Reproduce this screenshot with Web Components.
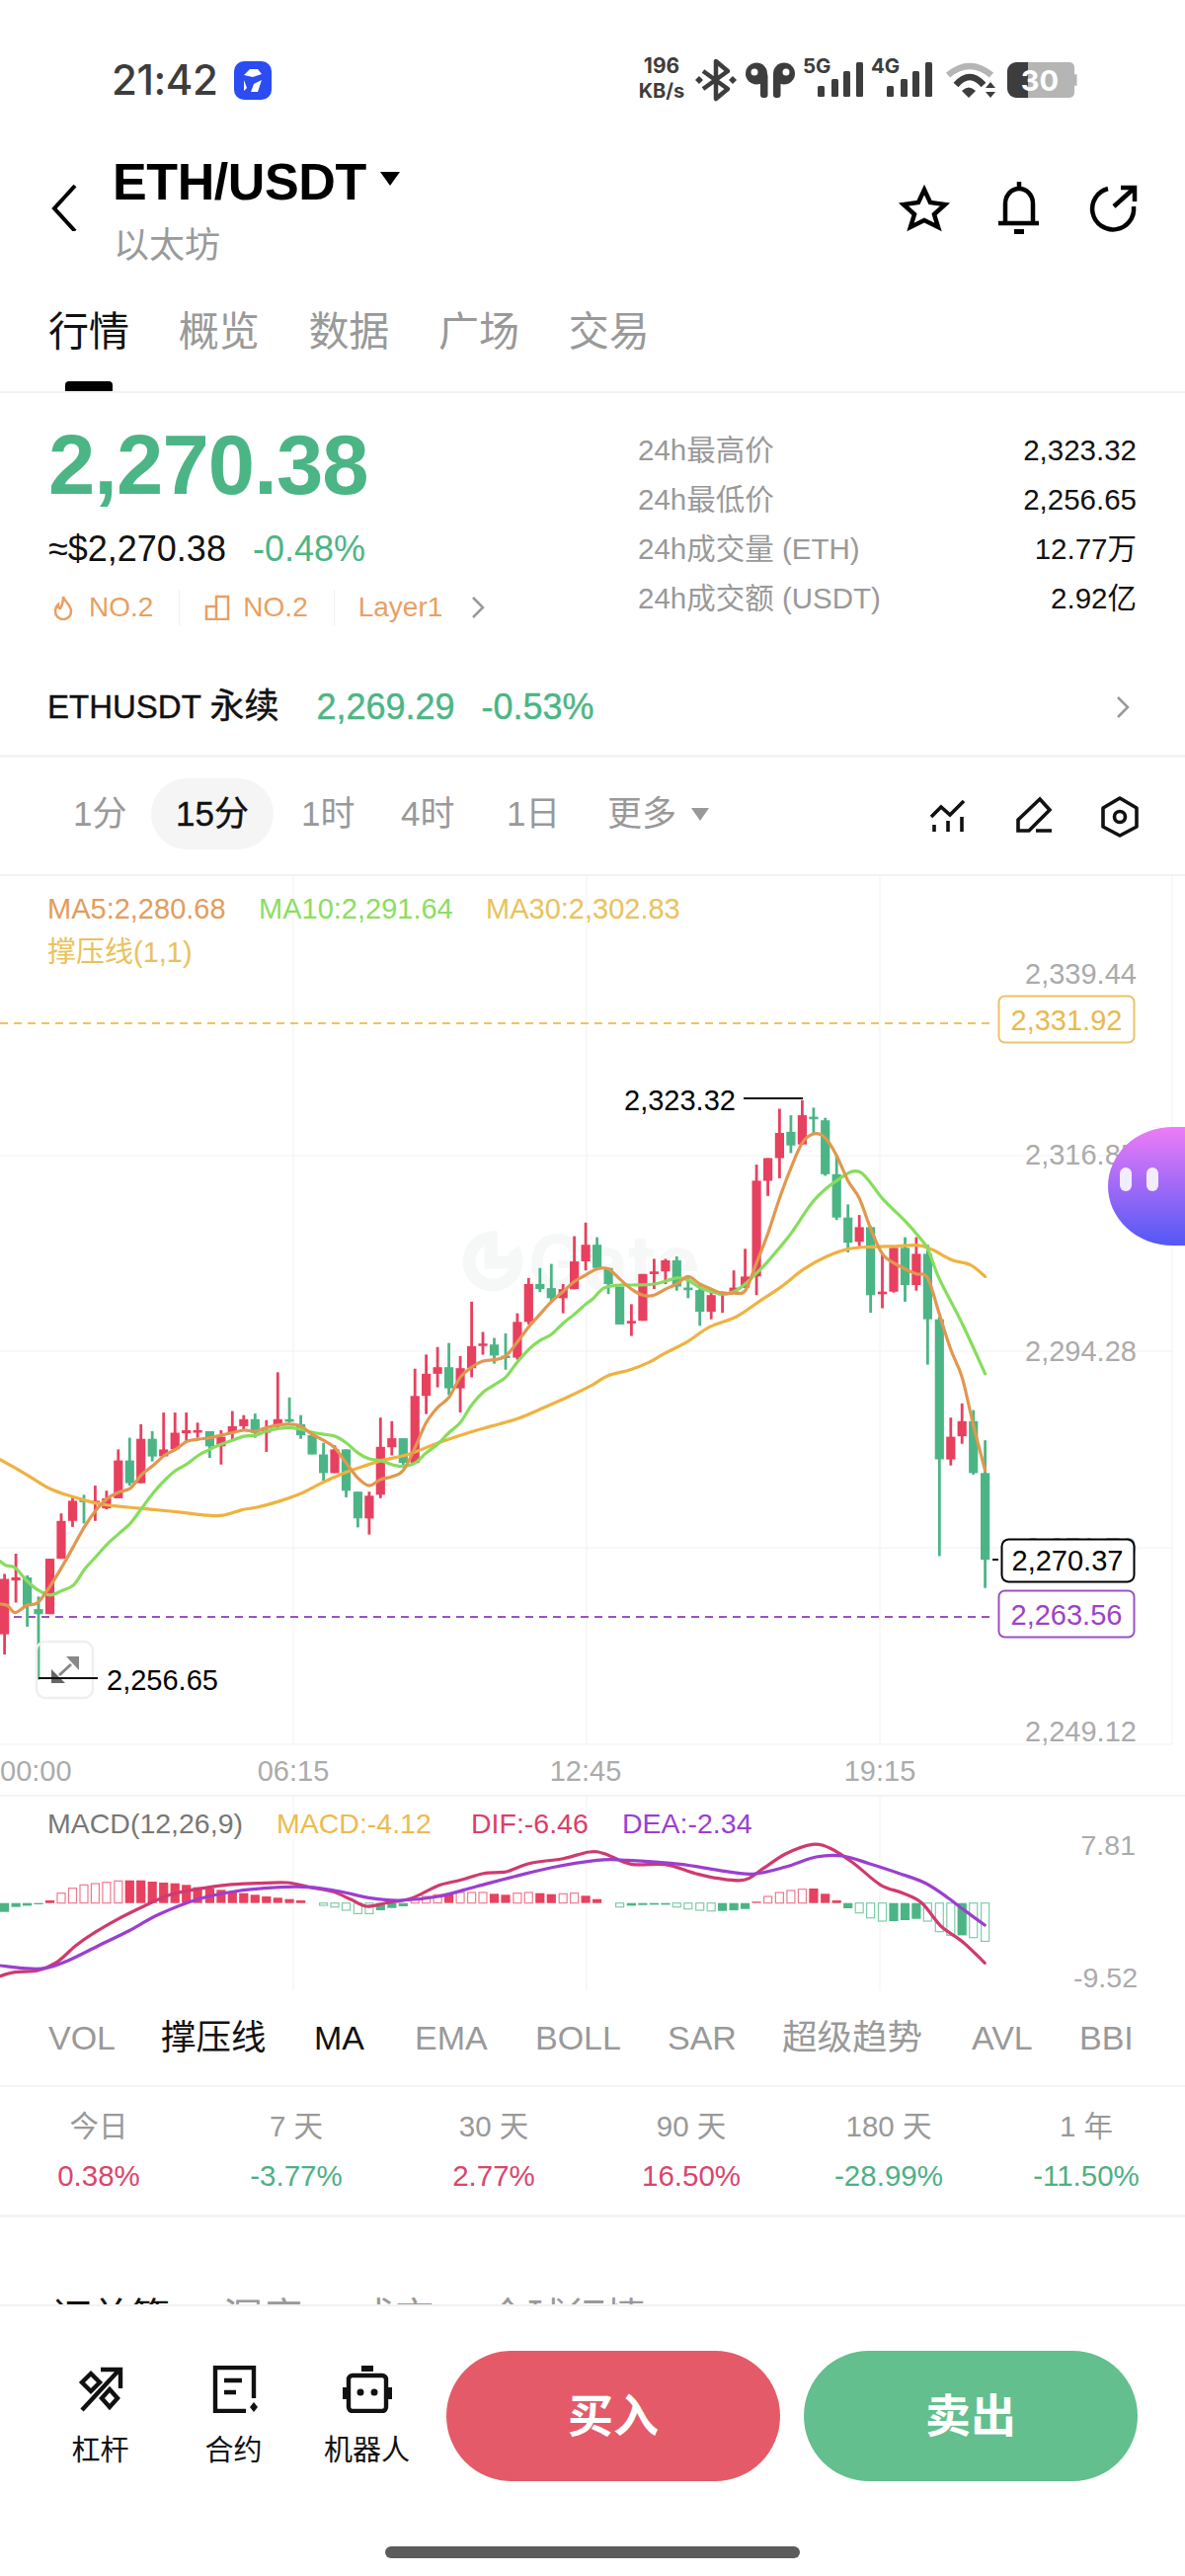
<!DOCTYPE html>
<html lang="zh">
<head>
<meta charset="utf-8">
<title>ETH/USDT</title>
<style>
  html, body { margin: 0; padding: 0; background: #fff; }
  body { width: 1200px; height: 2608px; overflow: hidden; font-family: "Liberation Sans", "Noto Sans CJK SC", sans-serif; }
  #app { display: flex; flex-direction: column; width: 1200px; height: 2608px; }
  #scroll { flex: 1; min-height: 0; overflow: hidden; }
</style>
</head>
<body>
<div id="app">
  <div id="scroll">
    <status-bar></status-bar>
    <nav-header pair="ETH/USDT" name="以太坊"></nav-header>
    <tab-strip main>
      <tab-item active bar>行情</tab-item><tab-item>概览</tab-item><tab-item>数据</tab-item><tab-item>广场</tab-item><tab-item>交易</tab-item>
    </tab-strip>
    <price-panel></price-panel>
    <perp-row></perp-row>
    <interval-bar></interval-bar>
    <kline-chart></kline-chart>
    <macd-chart></macd-chart>
    <indicator-tabs></indicator-tabs>
    <period-stats></period-stats>
    <tab-strip>
      <tab-item active>订单簿</tab-item><tab-item>深度</tab-item><tab-item>成交</tab-item><tab-item>全球行情</tab-item>
    </tab-strip>
  </div>
  <action-bar></action-bar>
</div>

<script>
const FONT = 'Inter, "Noto Sans CJK SC", sans-serif';
const CHART_FONT = '"Liberation Sans", "Noto Sans CJK SC", sans-serif';
const GREEN = '#4cb585';
const RED = '#e8405f';

class Base extends HTMLElement {
    constructor() {
        super();
        this._shadow = this.attachShadow({ mode: 'open' });
    }
    connectedCallback() {
        this._render();
    }
}

class StatusBar extends Base {
    _render() {
        const bars = (x0) => [[0, 87, 11], [14, 80, 18], [26, 72, 26], [39, 63, 35]]
            .map(([dx, y, h]) => `<rect x="${x0 + dx}" y="${y}" width="7" height="${h}" rx="1.5"/>`).join('');
        this._shadow.innerHTML = `
            <style>
                :host { display: flex; align-items: flex-start; height: 130px; box-sizing: border-box; padding: 57px 0 0 113px; color: #3d3d3d; font-family: ${FONT}; }
                .time { font-size: 42px; line-height: 48px; font-weight: 500; letter-spacing: -0.4px; }
                .app { margin: 5px 0 0 16px; width: 38px; height: 39px; border-radius: 10px; background: #2b4cf3; }
                .app svg { display: block; }
                .right { position: absolute; left: 0; top: 0; }
                text { font-family: ${FONT}; font-weight: 700; fill: #3d3d3d; }
            </style>
            <span class="time">21:42</span>
            <div class="app"><svg width="38" height="39" viewBox="0 0 38 39" fill="none" stroke="#fff" stroke-width="4.6">
                <path d="M10 14l6-6h8l4 5-9 3zM28 19l-4 12-7 0 3-8zM10 19l3 8-3 3z" fill="#fff" stroke="none"/></svg></div>
            <svg class="right" width="1200" height="120" viewBox="0 0 1200 120">
                <text x="670" y="74" font-size="21" text-anchor="middle">196</text>
                <text x="670" y="99" font-size="20" text-anchor="middle">KB/s</text>
                <path d="M712 72L737 90L725 100V62L737 72L712 90" fill="none" stroke="#3d3d3d" stroke-width="4.5" stroke-linejoin="round"/>
                <path d="M708 77l4 4-4 4-4-4zM742 77l4 4-4 4-4-4z" fill="#3d3d3d"/>
                <g fill="#3d3d3d">
                    <circle cx="766" cy="74.5" r="11"/><rect x="770" y="74" width="7.5" height="25" rx="3"/>
                    <circle cx="794" cy="74.5" r="11"/><rect x="783" y="74" width="7.5" height="25" rx="3"/>
                </g>
                <circle cx="764" cy="73" r="3.5" fill="#fff"/><circle cx="796" cy="73" r="3.5" fill="#fff"/>
                <text x="813" y="74" font-size="20.5">5G</text>
                <text x="882" y="74" font-size="20.5">4G</text>
                <g fill="#3d3d3d">${bars(828)}${bars(898)}</g>
                <path d="M960 76Q982 58 1004 76" fill="none" stroke="#b5b5b5" stroke-width="6.5"/>
                <path d="M968 86Q982 70 996 86" fill="none" stroke="#3d3d3d" stroke-width="6.5"/>
                <path d="M974 92Q981 85 988 92L981 99z" fill="#3d3d3d"/>
                <path d="M1003 83l5 6h-10zM1003 99l5-6h-10z" fill="#3d3d3d"/>
                <path d="M1028 63H1083a5 5 0 0 1 5 5v26a5 5 0 0 1-5 5H1028z" fill="#b5b5b5"/>
                <path d="M1041 63H1029a9 9 0 0 0-9 9v18a9 9 0 0 0 9 9H1041z" fill="#3d3d3d"/>
                <rect x="1088" y="75" width="2.5" height="12" rx="1" fill="#b5b5b5"/>
                <text x="1053" y="92" font-size="29" text-anchor="middle" style="fill:#fff">30</text>
            </svg>
        `;
    }
}

class NavHeader extends Base {
    _render() {
        this._shadow.innerHTML = `
            <style>
                :host { display: flex; height: 170px; box-sizing: border-box; padding-left: 50px; font-family: ${CHART_FONT}; color: #000; }
                .back { margin-top: 54px; }
                .col { margin-left: 35px; padding-top: 24px; margin-left: 35px; }
                .pair { display: flex; align-items: center; font-size: 52px; line-height: 60px; font-weight: 700; letter-spacing: -0.4px; margin-left: -1px; }
                .pair i { margin: -6px 0 0 14px; width: 0; height: 0; border: 10px solid transparent; border-top: 14px solid #000; border-bottom: 0; }
                .name { margin-top: 12px; font-size: 36px; line-height: 46px; color: #9a9a9a; }
                .icons { position: absolute; left: 0; top: 0; }
            </style>
            <svg class="back" width="30" height="50" viewBox="0 0 30 50" fill="none" stroke="#000" stroke-width="4"><path d="M26 4L5 27l21 23"/></svg>
            <div class="col">
                <div class="pair">${this.getAttribute('pair')}<i></i></div>
                <div class="name">${this.getAttribute('name')}</div>
            </div>
            <svg class="icons" width="1200" height="300" viewBox="0 0 1200 300" fill="none" stroke="#000" stroke-width="4.5">
                <path d="M936 192L942 205 957 207 946 217 950 230 936 223 922 230 926 217 915 207 930 205Z" stroke-linejoin="miter"/>
                <path d="M1011 226H1052M1018 226V206a14 15 0 0 1 28 0V226M1032 184v8"/>
                <rect x="1027" y="232" width="10" height="5" fill="#000" stroke="none"/>
                <path d="M1122 191A21 21 0 1 0 1148 209M1128 209L1148 191M1135 190H1149V204"/>
            </svg>
        `;
    }
}

class TabStrip extends Base {
    _render() {
        this._shadow.innerHTML = `
            <style>
                :host { display: flex; gap: 49.7px; height: 98px; box-sizing: border-box; padding: 0 0 0 49px; border-bottom: 2px solid #f3f3f3; --fs: 41px; }
                :host(:not([main])) { gap: 54px; padding: 66px 0 0 52px; height: 130px; border: 0; --fs: 40px; }
            </style>
            <slot></slot>
        `;
    }
}

class TabItem extends Base {
    _render() {
        this._shadow.innerHTML = `
            <style>
                :host { display: block; position: relative; font: 400 var(--fs)/60px ${FONT}; color: #999; height: 96px; }
                :host([active]) { color: #111; }
                :host([bar])::after { content: ''; position: absolute; left: 17px; width: 48px; top: 86px; height: 10px; border-radius: 4px 4px 0 0; background: #000; }
                div { margin-top: 5px; }
            </style>
            <div><slot></slot></div>
        `;
    }
}

class PricePanel extends Base {
    _render() {
        const rows = [
            ['24h最高价', '2,323.32'], ['24h最低价', '2,256.65'],
            ['24h成交量 (ETH)', '12.77万'], ['24h成交额 (USDT)', '2.92亿'],
        ];
        this._shadow.innerHTML = `
            <style>
                :host { display: flex; height: 272px; box-sizing: border-box; padding: 0 49px 0 49px; font-family: ${CHART_FONT}; }
                .left { width: 597px; padding-top: 31px; }
                .big { font-size: 85px; line-height: 84px; font-weight: 700; letter-spacing: -0.9px; color: ${GREEN}; }
                .sub { display: flex; gap: 27px; margin-top: 23px; font-size: 36px; line-height: 40px; color: #111; }
                .sub b { font-weight: 400; color: ${GREEN}; }
                .tags { display: flex; align-items: center; margin-top: 19px; font-size: 28px; line-height: 40px; color: #e99f62; }
                .tags svg { flex: none; }
                .sep { width: 1px; height: 36px; background: #f0f0f0; margin: 0 24px 0 26px; }
                .right { flex: 1; padding-top: 33px; }
                .row { display: flex; justify-content: space-between; height: 50px; line-height: 50px; font-size: 29.5px; color: #999; }
                .row span:last-child { color: #111; }
            </style>
            <div class="left">
                <div class="big">2,270.38</div>
                <div class="sub"><span>≈$2,270.38</span><b>-0.48%</b></div>
                <div class="tags">
                    <svg width="24" height="26" viewBox="0 0 24 26" fill="none" stroke="#e99f62" stroke-width="2.5" style="margin:0 14px 0 3px"><path d="M12 2c1 5 8 8 8 15a8 8 0 0 1-16 0c0-3 1-5 3-7 0 3 1 4 2 4 2-3 3-7 3-12z"/></svg>
                    <span>NO.2</span><i class="sep"></i>
                    <svg width="26" height="26" viewBox="0 0 26 26" fill="none" stroke="#e99f62" stroke-width="2.5" style="margin:0 13px 0 1px"><path d="M12 25V2h12v23zM12 25H2V12h10"/></svg>
                    <span>NO.2</span><i class="sep"></i>
                    <span>Layer1</span>
                    <svg width="16" height="26" viewBox="0 0 16 26" fill="none" stroke="#999" stroke-width="2.5" style="margin-left:28px"><path d="M3 3l10 10-10 10"/></svg>
                </div>
            </div>
            <div class="right">
                ${rows.map(([k, v]) => `<div class="row"><span>${k}</span><span>${v}</span></div>`).join('')}
            </div>
        `;
    }
}

class PerpRow extends Base {
    _render() {
        this._shadow.innerHTML = `
            <style>
                :host { display: flex; align-items: center; height: 97px; box-sizing: border-box; padding: 0 55px 3px 48px; border-bottom: 3px solid #f4f4f4; font: 400 36px/44px ${CHART_FONT}; color: #111; -webkit-text-stroke: 0.4px currentColor; }
                .n { font-size: 33px; }
                .n i { font-style: normal; font-size: 35px; }
                b { font-weight: 400; color: ${GREEN}; }
                .p { margin-left: 38px; }
                .c { margin-left: 27px; }
                svg { margin-left: auto; }
            </style>
            <span class="n">ETHUSDT <i>永续</i></span><b class="p">2,269.29</b><b class="c">-0.53%</b>
            <svg width="16" height="26" viewBox="0 0 16 26" fill="none" stroke="#999" stroke-width="2.5"><path d="M3 3l10 10-10 10"/></svg>
        `;
    }
}

class IntervalBar extends Base {
    _render() {
        this._shadow.innerHTML = `
            <style>
                :host { display: flex; align-items: center; height: 120px; box-sizing: border-box; padding: 0 0 4px 0; position: relative; border-bottom: 2px solid #f2f2f2; font: 400 35px/44px ${CHART_FONT}; color: #999; }
                .on { display: flex; align-items: center; justify-content: center; width: 124px; height: 72px; border-radius: 36px; background: #f5f5f5; color: #111; -webkit-text-stroke: 0.4px #111; }
                .more { display: flex; align-items: center; }
                .more i { margin-left: 15px; width: 0; height: 0; border: 9px solid transparent; border-top: 13px solid #999; border-bottom: 0; }
                svg { position: absolute; left: 0; top: 0; }
            </style>
            <span style="margin-left:74px">1分</span>
            <span class="on" style="margin-left:24.5px">15分</span>
            <span style="margin-left:28px">1时</span>
            <span style="margin-left:46.5px">4时</span>
            <span style="margin-left:52.5px">1日</span>
            <span class="more" style="margin-left:47.5px">更多<i></i></span>
            <svg width="1200" height="120" viewBox="0 767 1200 120" fill="none" stroke="#111" stroke-width="3.6">
                <path d="M943 827L953 817 962 825 976 811M946 835v7M960 831v11M974 827v15"/>
                <path d="M1053 809L1063 820 1042 841H1031V830ZM1049 841H1065"/>
                <path d="M1134 808L1151 818V837L1134 846 1117 837V818Z" stroke-linejoin="round"/>
                <circle cx="1134" cy="827" r="5.5"/>
            </svg>
        `;
    }
}

// velas en coordenadas de la captura ampliada: [x, alto, cuerpoArriba, cuerpoAbajo, bajo, color]
const R = RED, G = GREEN;
const VELAS = [
    [12,1165,1175,1285,1325,R],[42,1125,1172,1178,1222,R],[72,1168,1172,1228,1270,G],[102,1210,1235,1245,1375,G],
    [132,1135,1135,1245,1245,R],[162,1045,1060,1135,1135,R],[192,1012,1020,1060,1072,R],[222,1008,1018,1022,1065,G],
    [252,990,1020,1025,1060,R],[282,1000,1015,1035,1037,R],[313,918,940,1015,1015,R],[343,895,940,985,990,G],
    [373,868,897,985,985,R],[403,882,897,932,942,G],[433,845,918,932,932,R],[463,845,885,918,918,R],
    [493,845,880,886,905,R],[523,865,880,884,895,R],[555,882,882,912,935,G],[585,880,893,912,948,R],
    [615,842,872,885,900,R],[645,850,858,872,880,R],[675,847,858,885,895,G],[705,860,880,884,923,R],
    [735,765,858,870,875,R],[766,815,858,863,865,G],[796,850,868,890,897,G],[826,890,890,928,928,G],
    [856,905,928,965,980,G],[886,910,918,965,965,R],[916,918,918,1000,1013,G],[947,1002,1002,1055,1073,G],
    [977,1002,1010,1055,1087,R],[1007,855,913,1008,1015,R],[1037,862,896,914,930,R],[1067,896,896,945,950,G],
    [1098,758,812,945,945,R],[1128,730,768,812,848,R],[1158,715,755,768,795,R],[1188,707,755,797,810,G],
    [1218,733,757,797,845,R],[1248,625,713,757,775,R],[1278,685,708,712,730,R],[1308,697,710,732,748,G],
    [1338,688,732,736,760,G],[1369,648,665,736,740,R],[1399,578,590,665,670,R],[1429,558,590,600,606,G],
    [1459,550,598,618,625,G],[1490,590,600,618,648,R],[1520,495,545,600,600,R],[1550,468,512,545,563,R],
    [1580,497,512,558,560,G],[1610,558,558,590,610,G],[1640,595,595,670,670,G],[1671,630,663,668,693,R],
    [1701,570,570,663,663,R],[1731,540,565,570,600,R],[1761,540,543,565,590,R],[1791,535,543,595,603,G],
    [1821,575,597,602,618,G],[1852,590,602,645,673,G],[1882,600,612,645,660,R],[1912,605,605,612,647,R],
    [1942,563,597,605,607,R],[1972,520,575,597,597,R],[2002,353,385,575,612,R],[2032,340,340,385,415,R],
    [2063,242,290,340,380,R],[2093,255,288,315,330,G],[2123,225,255,313,313,R],[2153,240,258,263,292,G],
    [2184,260,265,372,375,G],[2214,335,372,458,463,G],[2244,432,458,508,527,G],[2274,453,477,506,515,R],
    [2304,475,477,612,647,G],[2335,530,605,610,638,R],[2365,518,518,605,607,R],[2395,497,518,592,625,G],
    [2425,497,530,592,603,R],[2455,512,530,660,750,G],[2486,655,660,938,1130,G],[2516,855,893,938,950,R],
    [2546,827,862,892,907,R],[2576,840,862,965,968,G],[2607,900,965,1137,1193,G],
];
const MA5 = [[0,1225],[20,1228],[40,1242],[70,1228],[100,1222],[132,1190],[165,1150],[195,1110],[225,1070],[255,1038],[285,1015],[315,1003],[345,995],[375,968],[405,950],[435,930],[465,918],[495,902],[525,898],[555,895],[585,890],[615,885],[645,880],[675,882],[705,875],[735,870],[766,868],[796,872],[826,888],[856,900],[886,915],[916,945],[947,975],[977,990],[1007,978],[1037,972],[1067,960],[1098,915],[1128,865],[1158,835],[1188,815],[1218,775],[1248,755],[1278,743],[1308,740],[1338,733],[1369,705],[1399,675],[1429,650],[1459,625],[1490,605],[1520,585],[1550,572],[1580,560],[1610,560],[1640,580],[1671,600],[1701,612],[1731,612],[1761,600],[1791,590],[1821,575],[1852,590],[1882,600],[1912,608],[1942,608],[1972,603],[2002,548],[2032,490],[2063,420],[2093,360],[2123,310],[2153,292],[2184,300],[2214,335],[2244,385],[2274,420],[2304,480],[2335,530],[2365,548],[2395,560],[2425,570],[2455,578],[2486,650],[2516,720],[2546,775],[2576,870],[2607,960]];
const MA10 = [[0,1140],[15,1148],[40,1153],[70,1178],[100,1197],[132,1207],[165,1198],[195,1187],[225,1155],[255,1130],[285,1105],[315,1085],[345,1065],[375,1035],[405,1005],[435,980],[465,960],[495,947],[525,930],[555,918],[585,908],[615,900],[645,892],[675,890],[705,882],[735,877],[766,875],[796,878],[826,884],[856,888],[886,892],[916,905],[947,925],[977,937],[1007,940],[1037,948],[1067,952],[1098,945],[1128,925],[1158,908],[1188,885],[1218,865],[1248,830],[1278,805],[1308,790],[1338,775],[1369,745],[1399,720],[1429,702],[1459,690],[1490,668],[1520,650],[1550,630],[1568,620],[1598,598],[1640,592],[1671,592],[1731,590],[1791,578],[1821,582],[1852,597],[1882,605],[1912,610],[1942,605],[1972,590],[2002,568],[2032,545],[2093,490],[2153,425],[2214,385],[2274,367],[2335,420],[2395,465],[2425,490],[2455,520],[2486,580],[2546,668],[2607,768]];
const MA30 = [[0,938],[40,955],[85,975],[130,995],[175,1008],[220,1018],[270,1027],[340,1033],[400,1037],[480,1043],[550,1049],[590,1049],[640,1038],[680,1033],[735,1022],[795,1006],[850,985],[900,968],[960,952],[1010,940],[1080,928],[1160,905],[1240,885],[1300,872],[1370,857],[1440,835],[1500,815],[1568,790],[1608,772],[1668,760],[1718,745],[1758,728],[1818,705],[1878,675],[1948,655],[2008,625],[2068,595],[2128,560],[2188,535],[2248,520],[2308,516],[2368,515],[2428,513],[2468,522],[2518,542],[2568,552],[2607,575]];

const X = (x) => x / 2.6133;
const Y = (y) => 1000 + y / 1.96;

// curva suave (Catmull-Rom) para que las medias no queden quebradas
const linea = (pts, fx, fy, color, w) => {
    const p = pts.map(([x, y]) => [fx(x), fy(y)]);
    let d = `M${p[0][0].toFixed(1)} ${p[0][1].toFixed(1)}`;
    for (let i = 0; i < p.length - 1; i++) {
        const a = p[i - 1] || p[i], b = p[i], c = p[i + 1], e = p[i + 2] || c;
        d += `C${(b[0] + (c[0] - a[0]) / 6).toFixed(1)} ${(b[1] + (c[1] - a[1]) / 6).toFixed(1)} ${(c[0] - (e[0] - b[0]) / 6).toFixed(1)} ${(c[1] - (e[1] - b[1]) / 6).toFixed(1)} ${c[0].toFixed(1)} ${c[1].toFixed(1)}`;
    }
    return `<path fill="none" stroke="${color}" stroke-width="${w}" stroke-linecap="round" d="${d}"/>`;
};

class KlineChart extends Base {
    _render() {
        const txt = (x, cy, s, fill, anchor = 'start') =>
            `<text x="${x}" y="${cy + 10.2}" fill="${fill}" text-anchor="${anchor}">${s}</text>`;
        const velas = VELAS.map(([x, h, t, b, l, c]) => {
            const cx = X(x);
            return `<rect x="${(cx - 1.4).toFixed(1)}" y="${Y(h).toFixed(1)}" width="2.8" height="${(Y(l) - Y(h)).toFixed(1)}" fill="${c}"/>` +
                `<rect x="${(cx - 4.6).toFixed(1)}" y="${Y(t).toFixed(1)}" width="9.2" height="${Math.max(Y(b) - Y(t), 2.5).toFixed(1)}" fill="${c}"/>`;
        }).join('');
        const grid = [297, 594, 891, 1187].map((x) => `<path d="M${x} 888V1767"/>`).join('') +
            [1171, 1369, 1568, 1767].map((y) => `<path d="M0 ${y}H1187"/>`).join('');
        this._shadow.innerHTML = `
            <style>
                :host { display: block; height: 930px; }
                svg { display: block; }
                text { font-family: ${CHART_FONT}; font-size: 29px; }
            </style>
            <svg width="1200" height="930" viewBox="0 888 1200 930">
                <defs><linearGradient id="blob" x1="0" y1="0" x2="0" y2="1"><stop offset="0" stop-color="#ee7cf7"/><stop offset="1" stop-color="#5258f5"/></linearGradient></defs>
                <g stroke="#f6f6f6" stroke-width="1.5" fill="none">${grid}</g>
                <path d="M520 1266A24 24 0 1 1 497 1254V1279H520" fill="none" stroke="#f6f8f8" stroke-width="13"/>
                <text x="535" y="1306" fill="#f6f8f8" style="font-size:76px;font-weight:700;font-family:Inter,sans-serif">Gate</text>
                ${txt(48, 921, 'MA5:2,280.68', '#e39c5c')}
                ${txt(262, 921, 'MA10:2,291.64', '#8ade62')}
                ${txt(492, 921, 'MA30:2,302.83', '#e9c25c')}
                ${txt(48, 965, '撑压线(1,1)', '#e9c25c')}
                ${txt(1038, 987, '2,339.44', '#ababab')}
                ${txt(1038, 1170, '2,316.85', '#ababab')}
                ${txt(1038, 1369, '2,294.28', '#ababab')}
                ${txt(1038, 1568, '2,271.70', '#ababab')}
                ${txt(1038, 1754, '2,249.12', '#ababab')}
                ${txt(0, 1794, '00:00', '#ababab')}
                ${txt(297, 1794, '06:15', '#ababab', 'middle')}
                ${txt(593, 1794, '12:45', '#ababab', 'middle')}
                ${txt(891, 1794, '19:15', '#ababab', 'middle')}
                <path d="M0 1037H1008" stroke="#f2c25c" stroke-width="2" stroke-dasharray="8 6"/>
                <path d="M0 1638H1008" stroke="#9c50c8" stroke-width="2" stroke-dasharray="8 6"/>
                ${velas}
                ${linea(MA30, X, Y, '#efb241', 3.2)}
                ${linea(MA10, X, Y, '#86dd5c', 3.2)}
                ${linea(MA5, X, Y, '#e0984f', 3.2)}
                <rect x="37" y="1663" width="57" height="57" rx="9" fill="none" stroke="#efefef" stroke-width="2.5"/>
                <path d="M60 1697L72 1686" stroke="#888" stroke-width="3"/>
                <path d="M80 1678H67L80 1692Z" fill="#888"/>
                <path d="M52 1705H66L52 1691Z" fill="#666"/>
                <path d="M39 1700H99M753 1113H813" stroke="#111" stroke-width="1.8"/>
                ${txt(632, 1115, '2,323.32', '#000')}
                ${txt(108, 1702, '2,256.65', '#000')}
                <path d="M1005 1580H1011" stroke="#111" stroke-width="2"/>
                <rect x="1011.5" y="1009.5" width="137" height="47" rx="6" fill="#fff" stroke="#e9c46a" stroke-width="2"/>
                ${txt(1080, 1034, '2,331.92', '#e9b94f', 'middle')}
                <rect x="1014.5" y="1559.5" width="134" height="43" rx="7" fill="#fff" stroke="#000" stroke-width="2"/>
                ${txt(1081, 1581, '2,270.37', '#000', 'middle')}
                <rect x="1011.5" y="1611.5" width="137" height="47" rx="6" fill="#fff" stroke="#9c50c8" stroke-width="2"/>
                ${txt(1080, 1636, '2,263.56', '#9c42c8', 'middle')}
                <path d="M1200 1142H1188C1150 1142 1122 1170 1122 1202C1122 1234 1150 1262 1188 1262H1200Z" fill="url(#blob)"/>
                <rect x="1134" y="1183" width="12" height="24" rx="6" fill="#f3ecff"/>
                <rect x="1161" y="1183" width="12" height="24" rx="6" fill="#f3ecff"/>
            </svg>
        `;
    }
}

const DIF = [[0,662],[20,650],[50,645],[75,620],[100,570],[125,530],[155,490],[190,450],[225,415],[260,398],[300,385],[340,380],[380,378],[410,392],[440,405],[465,430],[485,450],[510,440],[545,425],[580,387],[610,370],[640,350],[670,345],[700,320],[745,305],[780,285],[800,290],[835,322],[880,323],[920,350],[950,365],[985,370],[1010,335],[1040,290],[1075,262],[1100,275],[1130,320],[1165,385],[1195,410],[1220,440],[1245,510],[1275,560],[1303,622]];
const DEA = [[0,630],[30,638],[60,638],[90,615],[130,570],[170,525],[210,475],[260,430],[310,405],[370,392],[410,392],[450,405],[490,425],[530,432],[580,420],[630,390],[680,360],[730,332],[790,310],[830,310],[900,322],[950,340],[995,352],[1040,330],[1080,300],[1115,297],[1150,320],[1190,350],[1225,380],[1255,425],[1275,460],[1303,507]];
// histograma: [y ampliada, hueco]
const HIST = [[467,0],[452,0],[448,0],[444,0],[432,0],[410,1],[395,1],[385,1],[381,1],[377,1],[373,1],[371,0],[371,0],[375,0],[378,0],[380,0],[385,0],[392,0],[395,0],[400,0],[405,0],[410,0],[415,0],[420,0],[424,0],[428,0],[432,0],[440,0],[447,1],[452,1],[462,1],[472,1],[472,1],[462,0],[455,0],[450,0],[428,1],[420,1],[415,1],[412,0],[408,1],[408,1],[408,1],[412,0],[415,0],[410,1],[408,1],[410,0],[413,0],[412,1],[410,1],[418,0],[428,0],[441,0],[452,1],[448,0],[446,0],[445,0],[445,0],[452,1],[458,1],[462,1],[464,1],[464,0],[462,0],[458,0],[436,0],[420,1],[408,1],[402,1],[398,1],[396,0],[412,0],[432,0],[456,0],[470,1],[485,1],[495,1],[495,0],[492,0],[488,0],[495,1],[527,1],[538,1],[538,0],[545,1],[556,1]];

class MacdChart extends Base {
    _render() {
        const fx = (x) => x / 1.3067;
        const fy = (y) => 1780 + y / 3;
        const base = fy(440);
        const barras = HIST.map(([y, hueco], i) => {
            const cx = X(VELAS[i][0]);
            const top = Math.min(fy(y), base);
            const h = Math.abs(fy(y) - base);
            if (h < 0.5) return '';
            const color = y < 440 ? RED : GREEN;
            return hueco
                ? `<rect x="${(cx - 4).toFixed(1)}" y="${top.toFixed(1)}" width="8" height="${h.toFixed(1)}" fill="#fff" stroke="${color}" stroke-opacity=".7" stroke-width="1.2"/>`
                : `<rect x="${(cx - 4.6).toFixed(1)}" y="${top.toFixed(1)}" width="9.2" height="${h.toFixed(1)}" fill="${color}"/>`;
        }).join('');
        const t = (x, cy, s, fill, anchor = 'start') =>
            `<text x="${x}" y="${cy + 10}" fill="${fill}" text-anchor="${anchor}">${s}</text>`;
        this._shadow.innerHTML = `
            <style>
                :host { display: block; height: 198px; border-top: 2px solid #f3f3f3; box-sizing: border-box; }
                svg { display: block; }
                text { font-family: ${CHART_FONT}; font-size: 28.5px; }
            </style>
            <svg width="1200" height="196" viewBox="0 1819 1200 196">
                <g stroke="#f6f6f6" stroke-width="1.5"><path d="M297 1819V2015M594 1819V2015M891 1819V2015"/></g>
                ${t(48, 1846, 'MACD(12,26,9)', '#777')}
                ${t(280, 1846, 'MACD:-4.12', '#ecbb4f')}
                ${t(477, 1846, 'DIF:-6.46', '#d9416b')}
                ${t(630, 1846, 'DEA:-2.34', '#9b3fd0')}
                ${t(1150, 1868, '7.81', '#ababab', 'end')}
                ${t(1152, 2002, '-9.52', '#ababab', 'end')}
                ${barras}
                ${linea(DIF, fx, fy, '#cf3a6f', 3.2)}
                ${linea(DEA, fx, fy, '#9b3fd0', 3.2)}
            </svg>
        `;
    }
}

class IndicatorTabs extends Base {
    _render() {
        const items = [['VOL'], ['撑压线', 1, 1], ['MA', 1], ['EMA'], ['BOLL'], ['SAR'], ['超级趋势', 0, 1], ['AVL'], ['BBI']];
        this._shadow.innerHTML = `
            <style>
                :host { display: grid; grid-template-columns: 114px 155px 102px 122px 134px 116px 192px 109px 107px; align-items: center; height: 98px; box-sizing: border-box; padding-left: 49px; border-bottom: 2px solid #f3f3f3; font: 400 34px/44px ${CHART_FONT}; color: #999; overflow: hidden; white-space: nowrap; }
                .on { color: #111; }
                .cjk { font-size: 35.5px; }
            </style>
            ${items.map(([s, on, cjk]) => `<span class="${on ? 'on' : ''} ${cjk ? 'cjk' : ''}">${s}</span>`).join('')}
        `;
    }
}

class PeriodStats extends Base {
    _render() {
        const items = [['今日', '0.38%', 1], ['7 天', '-3.77%'], ['30 天', '2.77%', 1], ['90 天', '16.50%', 1], ['180 天', '-28.99%'], ['1 年', '-11.50%']];
        this._shadow.innerHTML = `
            <style>
                :host { display: grid; grid-template-columns: repeat(6, 200px); height: 132px; box-sizing: border-box; padding-top: 15px; border-bottom: 3px solid #f4f4f4; font-family: ${CHART_FONT}; text-align: center; }
                .k { font-size: 29.5px; line-height: 50px; color: #999; }
                .v { font-size: 29.5px; line-height: 50px; }
            </style>
            ${items.map(([k, v, up]) => `<div><div class="k">${k}</div><div class="v" style="color:${up ? '#d9466d' : '#4fb085'}">${v}</div></div>`).join('')}
        `;
    }
}

class ActionBar extends Base {
    _render() {
        this._shadow.innerHTML = `
            <style>
                :host { display: block; position: relative; flex: none; height: 275px; box-sizing: border-box; border-top: 2px solid #f2f2f2; background: #fff; font-family: ${FONT}; }
                .row { display: flex; align-items: flex-start; padding: 45px 48px 0 0; }
                .tool { flex: none; width: 135px; display: flex; flex-direction: column; align-items: center; color: #111; font-size: 29px; line-height: 40px; }
                .tool svg { display: block; margin-top: 15px; margin-bottom: 18px; }
                .tools { display: flex; margin-left: 34px; margin-right: 13px; }
                .btn { flex: none; width: 338px; height: 132px; box-sizing: border-box; padding-bottom: 9px; border-radius: 66px; display: flex; align-items: center; justify-content: center; color: #fff; font-size: 46px; font-weight: 700; }
                .buy { background: #e55a68; }
                .sell { background: #63bf8e; margin-left: 24px; }
                .home { position: absolute; left: 390px; top: 243px; width: 420px; height: 12px; border-radius: 6px; background: #5c5c5c; }
            </style>
            <div class="row">
                <div class="tools">
                    <div class="tool">
                        <svg width="48" height="48" viewBox="0 0 48 48" fill="none" stroke="#111" stroke-width="4.4">
                            <path d="M5 45L43 4M24 4H44V23"/><path d="M14 8l9 9-9 9-9-9zM33 24l8 9-8 9-8-9z"/>
                        </svg>
                        <span>杠杆</span>
                    </div>
                    <div class="tool">
                        <svg width="48" height="48" viewBox="0 0 48 48" fill="none" stroke="#111" stroke-width="4.4">
                            <path d="M36 46H5V2H44V33M14 15H32M14 27H26"/><path d="M44 37l4 5-4 5-4-5z" fill="#111" stroke="none"/>
                        </svg>
                        <span>合约</span>
                    </div>
                    <div class="tool">
                        <svg width="52" height="48" viewBox="0 0 52 48" fill="none" stroke="#111" stroke-width="4.4">
                            <rect x="7" y="10" width="38" height="36" rx="4"/>
                            <g fill="#111" stroke="none"><rect x="20" y="0" width="12" height="6"/><rect x="1" y="22" width="4" height="12"/><rect x="47" y="22" width="4" height="12"/><circle cx="19" cy="27" r="3.5"/><circle cx="33" cy="27" r="3.5"/></g>
                        </svg>
                        <span>机器人</span>
                    </div>
                </div>
                <div class="btn buy">买入</div>
                <div class="btn sell">卖出</div>
            </div>
            <div class="home"></div>
        `;
    }
}

customElements.define('status-bar', StatusBar);
customElements.define('nav-header', NavHeader);
customElements.define('tab-strip', TabStrip);
customElements.define('tab-item', TabItem);
customElements.define('price-panel', PricePanel);
customElements.define('perp-row', PerpRow);
customElements.define('interval-bar', IntervalBar);
customElements.define('kline-chart', KlineChart);
customElements.define('macd-chart', MacdChart);
customElements.define('indicator-tabs', IndicatorTabs);
customElements.define('period-stats', PeriodStats);
customElements.define('action-bar', ActionBar);
</script>
</body>
</html>
